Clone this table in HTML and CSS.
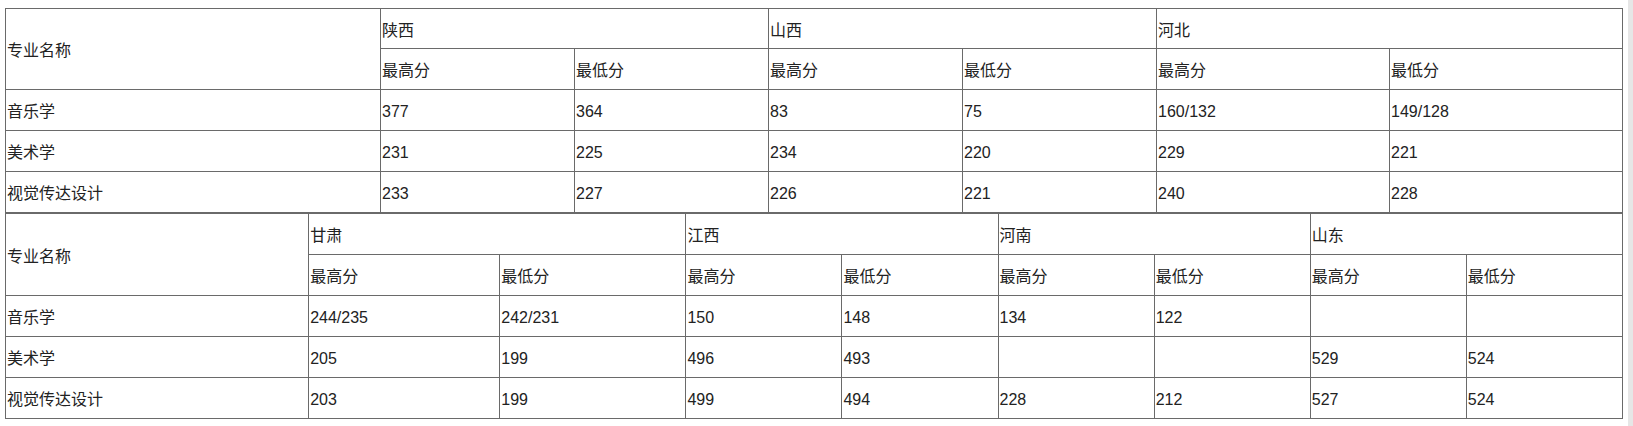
FILE: index.html
```html
<!DOCTYPE html>
<html lang="zh-CN">
<head>
<meta charset="utf-8">
<title>分数线</title>
<link rel="stylesheet" href="styles.css">
</head>
<body>
<div class="page">
  <table class="score t1">
    <colgroup>
      <col class="c-name1">
      <col class="c-a"><col class="c-a"><col class="c-a"><col class="c-a">
      <col class="c-b"><col class="c-b">
    </colgroup>
    <tr><td rowspan="2" class="name">专业名称</td><td colspan="2">陕西</td><td colspan="2">山西</td><td colspan="2">河北</td></tr>
    <tr><td>最高分</td><td>最低分</td><td>最高分</td><td>最低分</td><td>最高分</td><td>最低分</td></tr>
    <tr><td>音乐学</td><td>377</td><td>364</td><td>83</td><td>75</td><td>160/132</td><td>149/128</td></tr>
    <tr><td>美术学</td><td>231</td><td>225</td><td>234</td><td>220</td><td>229</td><td>221</td></tr>
    <tr><td>视觉传达设计</td><td>233</td><td>227</td><td>226</td><td>221</td><td>240</td><td>228</td></tr>
  </table>
  <table class="score t2">
    <colgroup>
      <col class="c-name2">
      <col class="c-g1"><col class="c-g2">
      <col class="c-s"><col class="c-s"><col class="c-s"><col class="c-s"><col class="c-s"><col class="c-s">
    </colgroup>
    <tr><td rowspan="2" class="name">专业名称</td><td colspan="2">甘肃</td><td colspan="2">江西</td><td colspan="2">河南</td><td colspan="2">山东</td></tr>
    <tr><td>最高分</td><td>最低分</td><td>最高分</td><td>最低分</td><td>最高分</td><td>最低分</td><td>最高分</td><td>最低分</td></tr>
    <tr><td>音乐学</td><td>244/235</td><td>242/231</td><td>150</td><td>148</td><td>134</td><td>122</td><td></td><td></td></tr>
    <tr><td>美术学</td><td>205</td><td>199</td><td>496</td><td>493</td><td></td><td></td><td>529</td><td>524</td></tr>
    <tr><td>视觉传达设计</td><td>203</td><td>199</td><td>499</td><td>494</td><td>228</td><td>212</td><td>527</td><td>524</td></tr>
  </table>
</div>
<div class="scrollbar"></div>
</body>
</html>
```

FILE: styles.css
```css
html, body {
  margin: 0;
  padding: 0;
  background: #ffffff;
}
body {
  font-family: "Liberation Sans", "Noto Sans CJK SC", sans-serif;
  font-size: 16px;
  color: #222222;
  overflow: hidden;
}
.page {
  padding: 8px 0 0 5px;
}
.score {
  border-collapse: collapse;
  table-layout: fixed;
  width: 1618px;
}
.score td {
  border: 1px solid #6a6a6a;
  height: 41px;
  padding: 4px 1px 0 1px;
  box-sizing: border-box;
  vertical-align: middle;
  text-align: left;
  line-height: 20px;
  white-space: nowrap;
}
.t1 tr:first-child td {
  height: 40px;
}
.c-name1 { width: 375px; }
.c-a { width: 194px; }
.c-b { width: 233px; }
.c-name2 { width: 303px; }
.c-g1 { width: 191px; }
.c-g2 { width: 186px; }
.c-s { width: 156px; }
.scrollbar {
  position: absolute;
  top: 0;
  right: 0;
  width: 5px;
  height: 426px;
  background: #e6e6e6;
}
```
